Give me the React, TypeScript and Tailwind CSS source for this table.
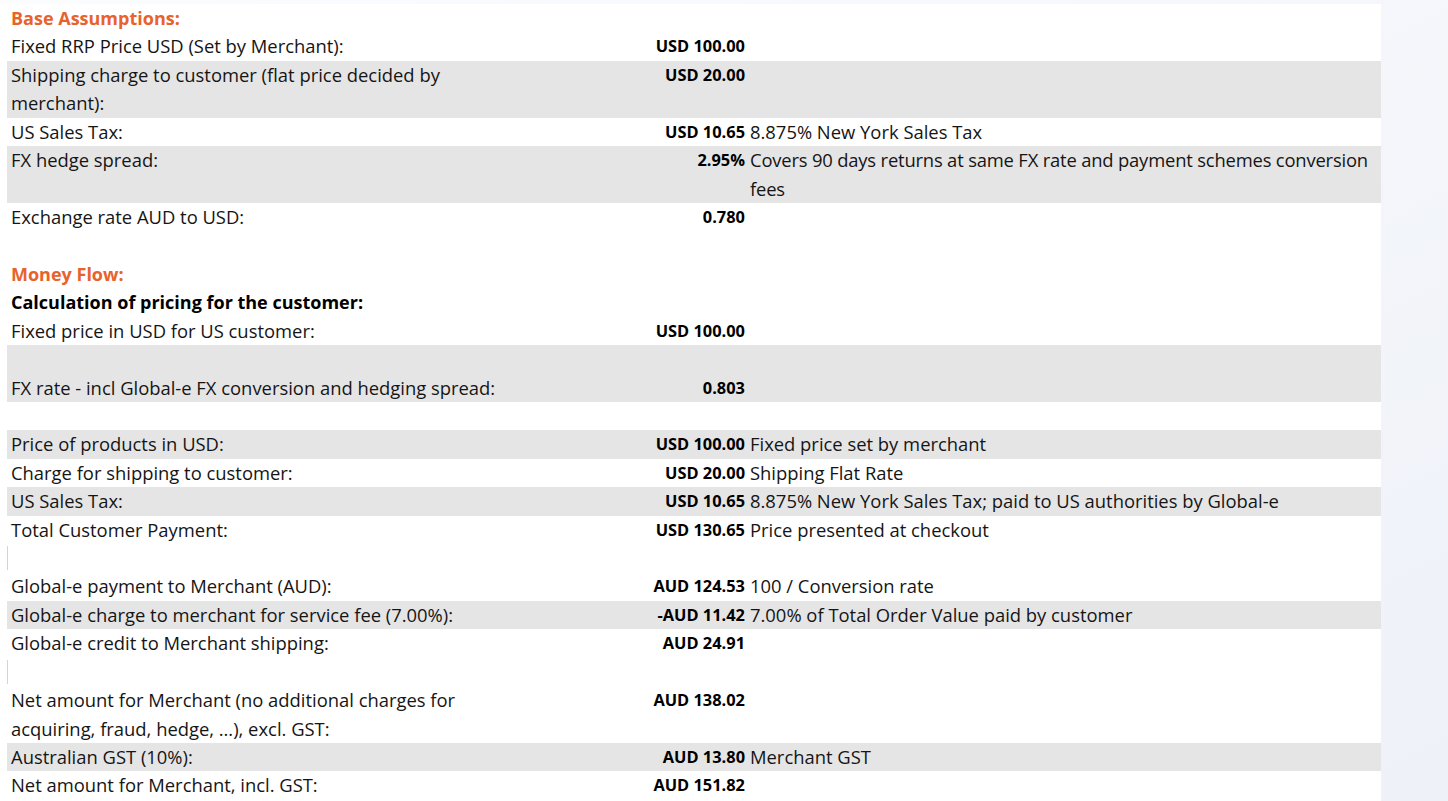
import React from "react";

type Row = {
  label?: string;
  value?: string;
  desc?: string;
  grey?: boolean;
  tall?: boolean;
  bottom?: boolean;
  tight?: boolean;
  kind?: "head" | "sub" | "blank" | "tick";
};

const rows: Row[] = [
  { kind: "head", label: "Base Assumptions:" },
  { label: "Fixed RRP Price USD (Set by Merchant):", value: "USD 100.00" },
  { label: "Shipping charge to customer (flat price decided by merchant):", value: "USD 20.00", grey: true, tall: true },
  { label: "US Sales Tax:", value: "USD 10.65", desc: "8.875% New York Sales Tax" },
  { label: "FX hedge spread:", value: "2.95%", desc: "Covers 90 days returns at same FX rate and payment schemes conversion fees", grey: true, tall: true, tight: true },
  { label: "Exchange rate AUD to USD:", value: "0.780" },
  { kind: "blank" },
  { kind: "head", label: "Money Flow:" },
  { kind: "sub", label: "Calculation of pricing for the customer:" },
  { label: "Fixed price in USD for US customer:", value: "USD 100.00" },
  { label: "FX rate - incl Global-e FX conversion and hedging spread:", value: "0.803", grey: true, tall: true, bottom: true },
  { kind: "blank" },
  { label: "Price of products in USD:", value: "USD 100.00", desc: "Fixed price set by merchant", grey: true },
  { label: "Charge for shipping to customer:", value: "USD 20.00", desc: "Shipping Flat Rate" },
  { label: "US Sales Tax:", value: "USD 10.65", desc: "8.875% New York Sales Tax; paid to US authorities by Global-e", grey: true },
  { label: "Total Customer Payment:", value: "USD 130.65", desc: "Price presented at checkout" },
  { kind: "tick" },
  { label: "Global-e payment to Merchant (AUD):", value: "AUD 124.53", desc: "100 / Conversion rate" },
  { label: "Global-e charge to merchant for service fee (7.00%):", value: "-AUD 11.42", desc: "7.00% of Total Order Value paid by customer", grey: true },
  { label: "Global-e credit to Merchant shipping:", value: "AUD 24.91" },
  { kind: "tick" },
  { label: "Net amount for Merchant (no additional charges for acquiring, fraud, hedge, …), excl. GST:", value: "AUD 138.02", tall: true },
  { label: "Australian GST (10%):", value: "AUD 13.80", desc: "Merchant GST", grey: true },
  { label: "Net amount for Merchant, incl. GST:", value: "AUD 151.82" },
];

function clsx(...a: (string | false | undefined)[]) {
  return a.filter(Boolean).join(" ");
}

function DataRow({ r }: { r: Row }) {
  return (
    <div
      className={clsx(
        "flex leading-[28.43px]",
        r.tall ? "h-[56.86px]" : "h-[28.43px]",
        r.grey && "bg-[#e6e5e6]",
        r.bottom ? "items-end" : "items-start"
      )}
    >
      <div className="w-[522px] shrink-0 pl-[4px] pr-[4px] text-[18.4px]">{r.label}</div>
      <div className="w-[216px] shrink-0 text-right text-[16.4px] font-bold text-black">{r.value}</div>
      <div className={clsx("flex-1 pl-[5px] pr-[1px] text-[18.4px]", r.tight && "tracking-[-0.18px]")}>{r.desc}</div>
    </div>
  );
}

export default function App() {
  return (
    <div className="w-[1448px] h-[801px] overflow-hidden bg-gradient-to-br from-[#fbfcfe] to-[#eef1f8] pt-[4px] font-['Open_Sans','Noto_Sans',sans-serif] text-[#151515]">
      <div className="w-[1381px] h-[797px] bg-white pl-[7px]">
        {rows.map((r, i) => {
          if (r.kind === "head") {
            return (
              <div key={i} className="flex h-[28.43px] items-center pl-[4px] text-[18px] font-bold text-[#e8622c]">
                {r.label}
              </div>
            );
          }
          if (r.kind === "sub") {
            return (
              <div key={i} className="flex h-[28.43px] items-center pl-[4px] text-[18px] font-bold text-black">
                {r.label}
              </div>
            );
          }
          if (r.kind === "blank") {
            return <div key={i} className="h-[28.43px]" />;
          }
          if (r.kind === "tick") {
            return (
              <div key={i} className="flex h-[28.43px] items-center">
                <div className="h-[24px] border-l border-[#d4d4d4]" />
              </div>
            );
          }
          return <DataRow key={i} r={r} />;
        })}
      </div>
    </div>
  );
}
